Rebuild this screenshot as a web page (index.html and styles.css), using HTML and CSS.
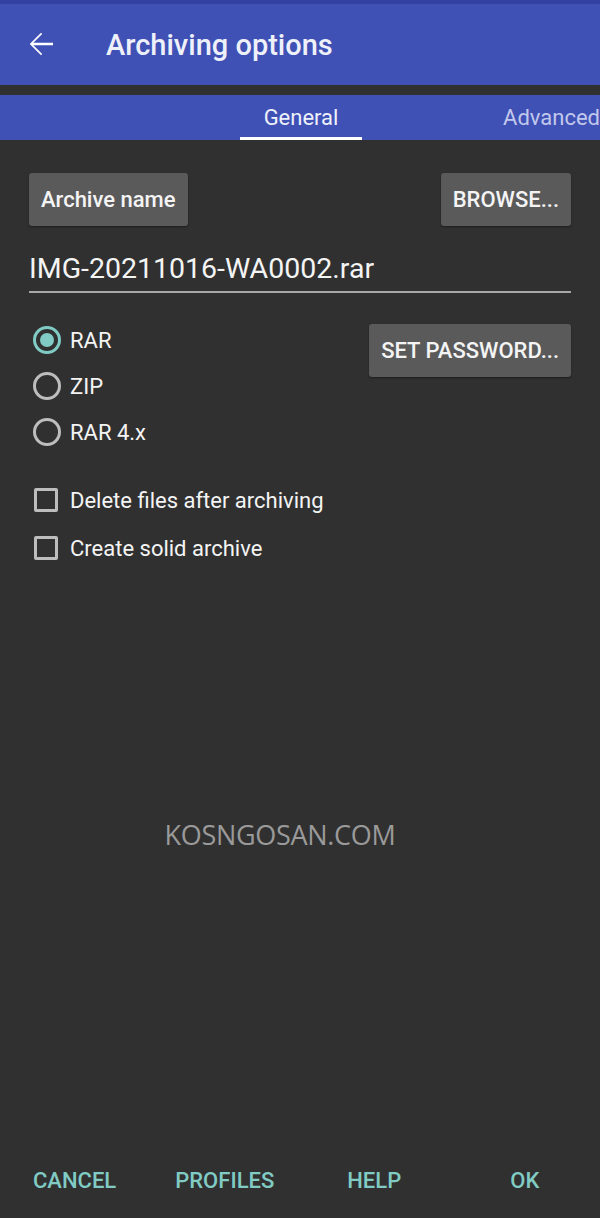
FILE: index.html
```html
<!DOCTYPE html>
<html lang="en">
<head>
    <meta charset="UTF-8">
    <meta name="viewport" content="width=device-width, initial-scale=1.0">
    <title>Archiving options</title>
    <link rel="stylesheet" href="styles.css">
</head>
<body>
    <div class="statusbar"></div>
    <header class="toolbar">
        <svg class="back" width="36" height="36" viewBox="0 0 24 24">
            <path d="M20 11.2H6.9l5.9-5.9L12 4.5l-7.5 7.5 7.5 7.5.8-.8-5.9-5.9H20z" fill="#fff"/>
        </svg>
        <h1>Archiving options</h1>
    </header>
    <nav class="tabs">
        <div class="tab active">General</div>
        <div class="tab">Advanced</div>
    </nav>
    <main class="content">
        <div class="row">
            <button class="btn">Archive name</button>
            <button class="btn caps">BROWSE...</button>
        </div>
        <div class="filename">IMG-20211016-WA0002.rar</div>
        <div class="options">
            <div class="radios">
                <label class="radio checked"><span class="dot"></span>RAR</label>
                <label class="radio"><span class="dot"></span>ZIP</label>
                <label class="radio"><span class="dot"></span>RAR 4.x</label>
            </div>
            <button class="btn caps">SET PASSWORD...</button>
        </div>
        <div class="checks">
            <label class="check"><span class="box"></span>Delete files after archiving</label>
            <label class="check"><span class="box"></span>Create solid archive</label>
        </div>
        <div class="watermark">KOSNGOSAN.COM</div>
    </main>
    <footer class="actions">
        <button class="act">CANCEL</button>
        <button class="act">PROFILES</button>
        <button class="act">HELP</button>
        <button class="act">OK</button>
    </footer>
</body>
</html>
```
FILE: styles.css
```css
* {
    box-sizing: border-box;
}

body {
    margin: 0;
    height: 1218px;
    background-color: #303030;
    font-family: Roboto, "Liberation Sans", sans-serif;
    color: #f2f2f2;
    display: flex;
    flex-direction: column;
}

.statusbar {
    height: 4px;
    background-color: #3341a3;
}

.toolbar {
    height: 81px;
    background-color: #3f51b5;
    display: flex;
    align-items: center;
    padding-left: 23px;
}

.back {
    margin-top: -1px;
}

.toolbar h1 {
    margin: 0 0 0 47px;
    font-size: 29px;
    font-weight: 500;
    color: #eef0fa;
}

.tabs {
    margin-top: 10px;
    height: 45px;
    background-color: #3f51b5;
    display: flex;
    justify-content: flex-end;
    overflow: hidden;
}

.tab {
    font-size: 22px;
    color: #c2c8ec;
    padding-top: 10px;
    text-align: center;
    white-space: nowrap;
}

.tab.active {
    width: 122px;
    color: #eef0fa;
    border-bottom: 3px solid #fff;
    margin-right: 141px;
}

.content {
    flex: 1;
    padding: 33px 29px 0 29px;
    display: flex;
    flex-direction: column;
}

.row {
    display: flex;
    justify-content: space-between;
}

.btn {
    height: 53px;
    padding: 0 12px;
    background-color: #5a5a5b;
    border: none;
    border-radius: 3px;
    color: #f4f4f4;
    font-family: Roboto, "Liberation Sans", sans-serif;
    font-size: 22px;
    font-weight: 500;
    box-shadow: 0 1px 2px rgba(0, 0, 0, 0.4);
}

.filename {
    margin-top: 26px;
    padding-bottom: 6px;
    font-size: 28.5px;
    border-bottom: 2px solid #a9a9a9;
    color: #f4f4f4;
}

.options {
    margin-top: 31px;
    display: flex;
    justify-content: space-between;
    align-items: flex-start;
}

.radios {
    display: flex;
    flex-direction: column;
    gap: 18px;
    margin-top: 2px;
}

.radio,
.check {
    display: flex;
    align-items: center;
    height: 28px;
    font-size: 22px;
    color: #f4f4f4;
}

.dot {
    width: 28px;
    height: 28px;
    border: 3px solid #bdbdbd;
    border-radius: 50%;
    margin: 0 9px 0 4px;
    display: flex;
    align-items: center;
    justify-content: center;
}

.radio.checked .dot {
    border-color: #80cbc4;
}

.radio.checked .dot::after {
    content: "";
    width: 14px;
    height: 14px;
    border-radius: 50%;
    background-color: #80cbc4;
}

.checks {
    margin-top: 40px;
    display: flex;
    flex-direction: column;
    gap: 20px;
}

.box {
    width: 24px;
    height: 24px;
    border: 3px solid #bdbdbd;
    border-radius: 2px;
    margin: 0 12px 0 5px;
}

.watermark {
    margin-top: 254px;
    text-align: center;
    margin-left: -40px;
    font-family: "Open Sans", sans-serif;
    font-size: 27px;
    color: #9a9a9a;
    letter-spacing: -0.3px;
}

.actions {
    height: 80px;
    display: flex;
    align-items: center;
    padding-top: 4px;
}

.act {
    background: none;
    border: none;
    color: #80cbc4;
    font-family: Roboto, "Liberation Sans", sans-serif;
    font-size: 22px;
    font-weight: 500;
    padding: 0;
}

.act:nth-child(1) { margin-left: 33px; }
.act:nth-child(2) { margin-left: 59px; }
.act:nth-child(3) { margin-left: 73px; }
.act:nth-child(4) { margin-left: 109px; }
```
